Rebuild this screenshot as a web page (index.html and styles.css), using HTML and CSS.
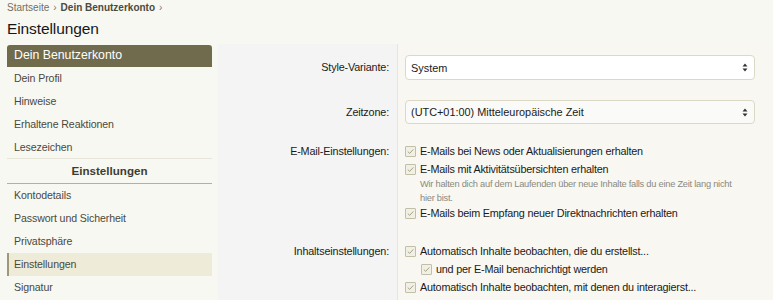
FILE: index.html
```html
<!DOCTYPE html>
<html lang="de">
<head>
<meta charset="utf-8">
<title>Einstellungen</title>
<link rel="stylesheet" href="styles.css">
</head>
<body>
<div class="top">
  <nav class="crumbs">
    <span class="crumb">Startseite</span>
    <span class="chev">›</span>
    <span class="crumb strong">Dein Benutzerkonto</span>
    <span class="chev">›</span>
  </nav>
  <h1 class="title">Einstellungen</h1>
</div>
<div class="layout">
  <aside class="side">
    <div class="side-head">Dein Benutzerkonto</div>
    <a class="side-link">Dein Profil</a>
    <a class="side-link">Hinweise</a>
    <a class="side-link">Erhaltene Reaktionen</a>
    <a class="side-link last">Lesezeichen</a>
    <div class="side-sub">Einstellungen</div>
    <a class="side-link">Kontodetails</a>
    <a class="side-link">Passwort und Sicherheit</a>
    <a class="side-link">Privatsphäre</a>
    <a class="side-link active">Einstellungen</a>
    <a class="side-link">Signatur</a>
  </aside>
  <main class="form">
    <div class="row r1">
      <div class="label">Style-Variante:</div>
      <div class="field">
        <div class="select white"><span>System</span><svg class="arrows" width="6" height="9" viewBox="0 0 6 9"><path d="M3 0.5L5.5 3.5H0.5Z M3 8.5L0.5 5.5H5.5Z" fill="#333"/></svg></div>
      </div>
    </div>
    <div class="row r2">
      <div class="label">Zeitzone:</div>
      <div class="field">
        <div class="select"><span>(UTC+01:00) Mitteleuropäische Zeit</span><svg class="arrows" width="6" height="9" viewBox="0 0 6 9"><path d="M3 0.5L5.5 3.5H0.5Z M3 8.5L0.5 5.5H5.5Z" fill="#333"/></svg></div>
      </div>
    </div>
    <div class="row r3">
      <div class="label">E-Mail-Einstellungen:</div>
      <div class="field list">
        <div class="check"><span class="box"><svg width="9" height="9" viewBox="0 0 9 9"><path d="M1.8 4.6L3.7 6.4L7.3 2.4" fill="none" stroke="#a7a383" stroke-width="1"/></svg></span><span>E-Mails bei News oder Aktualisierungen erhalten</span></div>
        <div class="check"><span class="box"><svg width="9" height="9" viewBox="0 0 9 9"><path d="M1.8 4.6L3.7 6.4L7.3 2.4" fill="none" stroke="#a7a383" stroke-width="1"/></svg></span><span>E-Mails mit Aktivitätsübersichten erhalten</span></div>
        <div class="hint">Wir halten dich auf dem Laufenden über neue Inhalte falls du eine Zeit lang nicht hier bist.</div>
        <div class="check"><span class="box"><svg width="9" height="9" viewBox="0 0 9 9"><path d="M1.8 4.6L3.7 6.4L7.3 2.4" fill="none" stroke="#a7a383" stroke-width="1"/></svg></span><span>E-Mails beim Empfang neuer Direktnachrichten erhalten</span></div>
      </div>
    </div>
    <div class="row r4">
      <div class="label">Inhaltseinstellungen:</div>
      <div class="field list">
        <div class="check"><span class="box"><svg width="9" height="9" viewBox="0 0 9 9"><path d="M1.8 4.6L3.7 6.4L7.3 2.4" fill="none" stroke="#a7a383" stroke-width="1"/></svg></span><span>Automatisch Inhalte beobachten, die du erstellst...</span></div>
        <div class="check sub"><span class="box"><svg width="9" height="9" viewBox="0 0 9 9"><path d="M1.8 4.6L3.7 6.4L7.3 2.4" fill="none" stroke="#a7a383" stroke-width="1"/></svg></span><span>und per E-Mail benachrichtigt werden</span></div>
        <div class="check"><span class="box"><svg width="9" height="9" viewBox="0 0 9 9"><path d="M1.8 4.6L3.7 6.4L7.3 2.4" fill="none" stroke="#a7a383" stroke-width="1"/></svg></span><span>Automatisch Inhalte beobachten, mit denen du interagierst...</span></div>
        <div class="check sub"><span class="box"><svg width="9" height="9" viewBox="0 0 9 9"><path d="M1.8 4.6L3.7 6.4L7.3 2.4" fill="none" stroke="#a7a383" stroke-width="1"/></svg></span><span>und per E-Mail benachrichtigt werden</span></div>
      </div>
    </div>
  </main>
</div>
</body>
</html>
```
FILE: styles.css
```css
html, body {
  margin: 0;
  padding: 0;
}
body {
  background: #f8f8f3;
  font-family: "Liberation Sans", Arial, sans-serif;
  color: #1a1a18;
  overflow: hidden;
  height: 300px;
}
.top {
  padding: 2px 7px 0 7px;
}
.crumbs {
  font-size: 10px;
  line-height: 12px;
  color: #6f6f66;
  display: flex;
  gap: 4px;
  align-items: center;
}
.crumb.strong {
  font-weight: bold;
  color: #4a4a3e;
}
.chev {
  font-size: 10px;
  color: #777;
}
.title {
  margin: 5px 0 0 0;
  font-size: 15.5px;
  font-weight: normal;
  line-height: 20px;
  color: #161616;
  letter-spacing: -0.1px;
}
.layout {
  display: flex;
  gap: 6px;
  margin-top: 5px;
  padding-left: 7px;
}
.side {
  width: 205px;
  flex: none;
  padding-top: 1px;
}
.side-head {
  background: #6f6b4c;
  color: #fff;
  font-size: 12.3px;
  height: 22px;
  line-height: 21px;
  padding-left: 7px;
  border-radius: 3px 3px 0 0;
}
.side-link {
  display: block;
  height: 23px;
  line-height: 23px;
  padding-left: 7px;
  font-size: 10.6px;
  letter-spacing: -0.1px;
  color: #4a493c;
}
.side-link.last {
  border-bottom: 1px solid #e7e5da;
  height: 22px;
}
.side-link.active {
  background: #eeecd9;
  border-left: 2px solid #9d9978;
  padding-left: 5px;
}
.side-sub {
  line-height: 24px;
  text-align: center;
  font-weight: bold;
  font-size: 11.6px;
  color: #3d3c30;
  border-bottom: 1px solid #b5b196;
  box-sizing: border-box;
  height: 25px;
}
.form {
  flex: 1;
  background: #f8f7f2;
  min-height: 300px;
}
.row {
  display: grid;
  grid-template-columns: 180px 1fr;
}
.label {
  background: #f4f4f4;
  border-right: 1px solid #e6e6e0;
  text-align: right;
  padding: 10px 8px 10px 0;
  font-size: 10.8px;
  letter-spacing: -0.15px;
  line-height: 15px;
  color: #1a1a18;
}
.r1 .label {
  padding-top: 16px;
}
.r2 .label {
  padding-top: 15px;
}
.r4 .label {
  padding-top: 13px;
}
.field {
  padding: 10px 18px 10px 7px;
}
.r1 .field {
  padding-top: 11px;
}
.r4 .field {
  padding-top: 13px;
}
.select {
  height: 25px;
  box-sizing: border-box;
  border: 1px solid #dbd9c6;
  border-radius: 4px;
  background: #fafaf8;
  display: flex;
  align-items: center;
  justify-content: space-between;
  padding: 0 6px 0 5px;
  font-size: 10.9px;
  color: #1a1a18;
}
.select.white {
  background: #ffffff;
}
.r2 .select {
  height: 24px;
}
.list {
  display: flex;
  flex-direction: column;
  gap: 3px;
}
.check {
  display: flex;
  align-items: center;
  gap: 4px;
  font-size: 10.8px;
  letter-spacing: -0.2px;
  line-height: 15px;
  color: #1a1a18;
}
.check.sub {
  padding-left: 16px;
}
.box {
  width: 11px;
  height: 11px;
  box-sizing: border-box;
  border: 1px solid #c2bfa8;
  background: #f1f0e6;
  border-radius: 1px;
  display: flex;
  align-items: center;
  justify-content: center;
  flex: none;
}
.box svg {
  display: block;
}
.hint {
  padding-left: 15px;
  margin-top: -3px;
  margin-bottom: -2px;
  font-size: 9.3px;
  letter-spacing: -0.25px;
  line-height: 14px;
  color: #8a8a80;
  max-width: 322px;
}
```
